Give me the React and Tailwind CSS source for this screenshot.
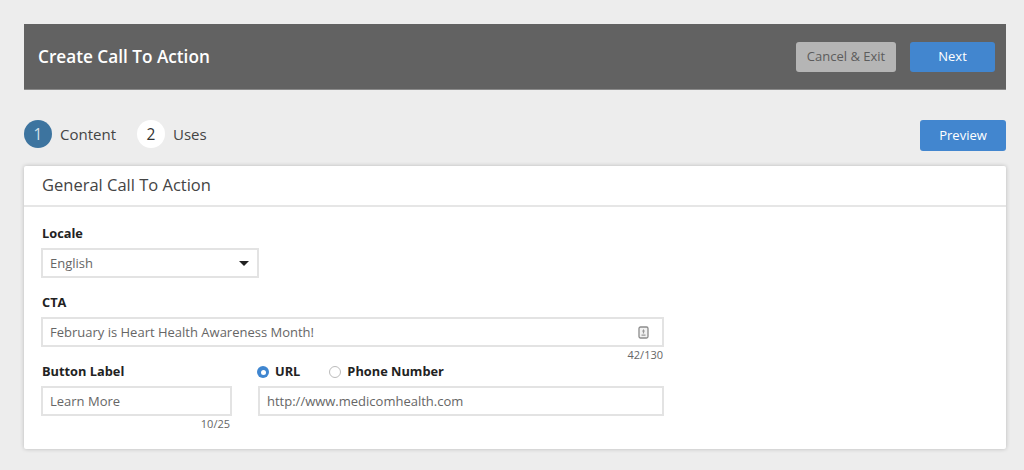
import React from "react";

const Step = ({ n, label, active }) => (
  <div className="flex items-center">
    <span
      className={`w-[28px] h-[28px] rounded-full flex items-center justify-center pt-[2px] text-[15.5px] ${
        active ? "bg-[#3d749f] text-[#d5e2ec]" : "bg-white text-[#333]"
      }`}
    >
      {n}
    </span>
    <span className="ml-[8px] text-[15px] text-[#444]">{label}</span>
  </div>
);

const Field = ({ className, children }) => (
  <div
    className={`h-[30px] border-2 border-[#e3e3e3] bg-white pl-[7px] pr-[8px] pt-[1px] flex items-center justify-between text-[13px] text-[#666] ${className}`}
  >
    {children}
  </div>
);

const Label = ({ className, children }) => (
  <div className={`pl-px text-[12.8px] font-bold text-[#222] leading-[18px] ${className}`}>{children}</div>
);

const Radio = ({ checked, label, className }) => (
  <div className={`flex items-center ${className}`}>
    {checked ? (
      <span className="w-[12px] h-[12px] rounded-full bg-[#3f86d0] flex items-center justify-center">
        <span className="w-[5px] h-[5px] rounded-full bg-white" />
      </span>
    ) : (
      <span className="w-[12px] h-[12px] rounded-full border border-[#bbb] bg-white" />
    )}
    <span className="ml-[6px] text-[12.8px] font-bold text-[#222]">{label}</span>
  </div>
);

export default function App() {
  return (
    <div className="w-[1024px] h-[470px] overflow-hidden bg-[#ededed] pt-[24px] pl-[24px] pr-[18px] font-['Open_Sans','Noto_Sans',sans-serif]">
      <div className="w-[982px] h-[66px] bg-[#626262] border-b border-[#8a8a8a] pl-[14px] pr-[11px] flex items-center justify-between">
        <h1 className="text-[17.2px] font-semibold text-white">Create Call To Action</h1>
        <div className="flex items-center gap-[14px]">
          <button className="w-[100px] h-[30px] rounded-[3px] bg-[#b5b5b5] text-[13px] text-[#5c5c5c]">
            Cancel &amp; Exit
          </button>
          <button className="w-[85px] h-[30px] rounded-[3px] bg-[#4286cf] text-[13px] text-white">
            Next
          </button>
        </div>
      </div>

      <div className="h-[31px] mt-[30px] flex items-start justify-between">
        <div className="flex items-center gap-[21px]">
          <Step n="1" label="Content" active />
          <Step n="2" label="Uses" />
        </div>
        <button className="w-[86px] h-[31px] rounded-[3px] bg-[#4286cf] text-[13px] text-white">
          Preview
        </button>
      </div>

      <div className="mt-[15px] w-[982px] h-[283px] bg-white rounded-[2px] shadow-[0_0_4px_rgba(0,0,0,0.22)]">
        <div className="h-[41px] border-b-2 border-[#e6e6e6] pl-[18px] flex items-center text-[16.5px] text-[#444]">
          General Call To Action
        </div>
        <div className="pl-[17px] pt-[17px] w-[640px]">
          <Label>Locale</Label>
          <Field className="w-[218px] mt-[6px]">
            English
            <span className="w-0 h-0 border-l-[5px] border-r-[5px] border-t-[5px] border-l-transparent border-r-transparent border-t-[#222]" />
          </Field>
          <Label className="mt-[15px]">CTA</Label>
          <Field className="mt-[6px]">
            February is Heart Health Awareness Month!
            <svg width="11" height="13" viewBox="0 0 11 13" className="mr-[5px]">
              <rect x="1" y="1" width="9" height="11" rx="1.5" fill="#f2f2f2" stroke="#8c8c8c" strokeWidth="1.3" />
              <path d="M5.5 3 L7 5.5 H6.1 V7.5 H4.9 V5.5 H4 Z M3.5 8.5 H7.5 V9.7 H3.5 Z" fill="#999" />
            </svg>
          </Field>
          <div className="text-right text-[11px] leading-[14px] text-[#666] pr-px mt-[1px]">42/130</div>
          <div className="flex gap-[26px]">
            <div className="w-[191px]">
              <Label>Button Label</Label>
              <Field className="mt-[6px]">Learn More</Field>
              <div className="text-right text-[11px] leading-[14px] text-[#666] pr-[2px] mt-[1px]">10/25</div>
            </div>
            <div className="flex-1">
              <div className="flex h-[18px] mt-[1px] -ml-px">
                <Radio checked label="URL" />
                <Radio label="Phone Number" className="ml-[29px]" />
              </div>
              <Field className="mt-[5px]">http://www.medicomhealth.com</Field>
            </div>
          </div>
        </div>
      </div>
    </div>
  );
}
